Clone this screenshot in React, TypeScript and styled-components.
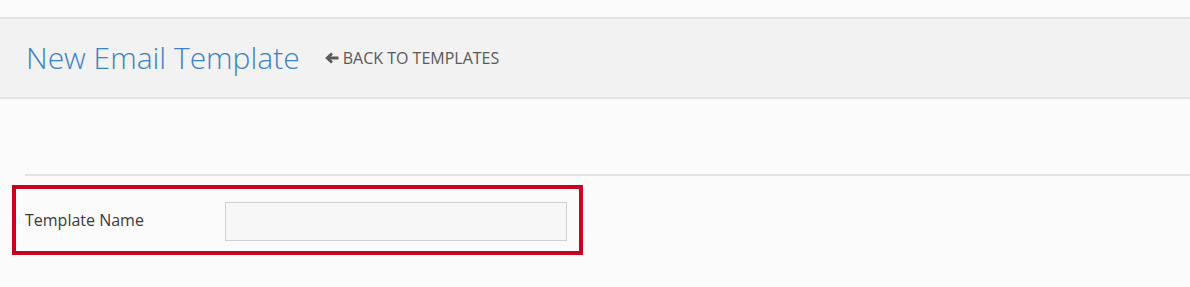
import styled, { createGlobalStyle } from "styled-components";

const GlobalStyle = createGlobalStyle`
    html, body {
        margin: 0;
        padding: 0;
        background: #fbfbfb;
        font-family: "Open Sans", "Liberation Sans", sans-serif;
    }
`;

const Page = styled.div`
    padding-top: 17px;
`;

const Header = styled.div`
    display: flex;
    align-items: center;
    height: 78px;
    padding: 0 26px;
    background: #f2f2f2;
    border-top: 2px solid #e3e3e3;
    border-bottom: 2px solid #e3e3e3;
`;

const Title = styled.h1`
    margin: 0 0 2px;
    font-size: 30px;
    font-weight: 300;
    color: #3a82c6;
`;

const BackLink = styled.a`
    display: flex;
    align-items: center;
    gap: 4px;
    margin-left: 25px;
    font-size: 16px;
    color: #595959;
    text-decoration: none;
    text-transform: uppercase;
    cursor: pointer;
`;

const Content = styled.div`
    padding: 75px 0 0 12px;
`;

const Divider = styled.hr`
    margin: 0 0 9px 13px;
    border: none;
    height: 2px;
    background: #e3e3e3;
`;

const Highlight = styled.div`
    display: flex;
    align-items: center;
    width: 571px;
    height: 70px;
    box-sizing: border-box;
    border: 4px solid #cc0020;
    padding: 0 12px 0 9px;
`;

const Label = styled.label`
    width: 200px;
    font-size: 16px;
    color: #3a3a3a;
`;

const Input = styled.input`
    width: 342px;
    height: 39px;
    box-sizing: border-box;
    margin-top: 3px;
    background: #f7f7f7;
    border: 1px solid #cfcfcf;
    font: inherit;
    &:focus {
        outline: none;
    }
`;

const ArrowLeft = () => (
    <svg width="14" height="12" viewBox="0 0 14 12" fill="none" stroke="#595959">
        <polyline points="7,1.5 2.2,6 7,10.5" strokeWidth="2.8" />
        <line x1="3" y1="6" x2="13.5" y2="6" strokeWidth="3" />
    </svg>
);

const App = () => {
    return (
        <Page>
            <GlobalStyle />
            <Header>
                <Title>New Email Template</Title>
                <BackLink>
                    <ArrowLeft />
                    Back to Templates
                </BackLink>
            </Header>
            <Content>
                <Divider />
                <Highlight>
                    <Label htmlFor="template-name">Template Name</Label>
                    <Input id="template-name" />
                </Highlight>
            </Content>
        </Page>
    );
};

export default App;
